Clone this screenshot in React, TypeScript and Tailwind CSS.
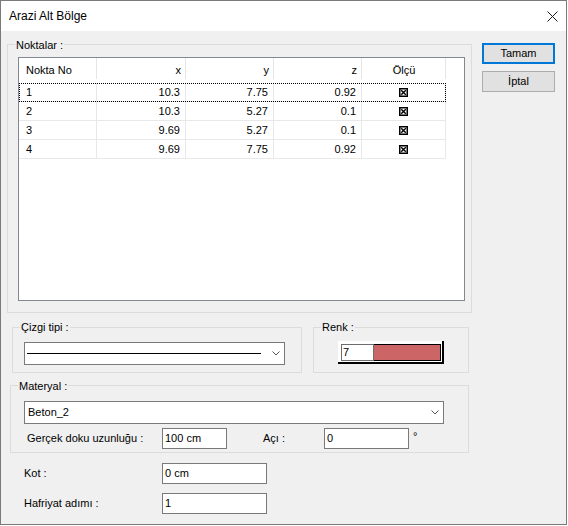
import type { ReactNode } from 'react'

const font = { fontFamily: '"Liberation Sans", Arial, sans-serif' }

const columns = [
  { label: 'Nokta No', width: 'w-[78px]', align: 'left' },
  { label: 'x', width: 'w-[89px]', align: 'right' },
  { label: 'y', width: 'w-[88px]', align: 'right' },
  { label: 'z', width: 'w-[88px]', align: 'right' },
  { label: 'Ölçü', width: 'w-[84px]', align: 'center' },
]

const points = [
  { no: '1', x: '10.3', y: '7.75', z: '0.92' },
  { no: '2', x: '10.3', y: '5.27', z: '0.1' },
  { no: '3', x: '9.69', y: '5.27', z: '0.1' },
  { no: '4', x: '9.69', y: '7.75', z: '0.92' },
]

function alignClass(align: string) {
  if (align === 'left') return 'justify-start pl-[7px]'
  if (align === 'center') return 'justify-center'
  return 'justify-end pr-[5px]'
}

function GroupBox({
  label,
  labelTop,
  className,
  children,
}: {
  label: string
  labelTop: string
  className: string
  children: ReactNode
}) {
  return (
    <div className={`relative border border-[#dcdcdc] ${className}`}>
      <span className={`absolute left-[7px] ${labelTop} bg-[#f0f0f0] px-[1px] leading-[13px]`}>
        {label}
      </span>
      {children}
    </div>
  )
}

function Chevron() {
  return (
    <svg width="8" height="5" viewBox="0 0 8 5" className="shrink-0">
      <path d="M0.5 0.5 L4 4 L7.5 0.5" fill="none" stroke="#555" strokeWidth="1" />
    </svg>
  )
}

function CheckMark() {
  return (
    <svg width="9" height="9" viewBox="0 0 9 9">
      <rect x="0.75" y="0.75" width="7.5" height="7.5" fill="none" stroke="#000" strokeWidth="1.5" />
      <path d="M2.2 2.2 L6.8 6.8 M6.8 2.2 L2.2 6.8" stroke="#000" strokeWidth="1.4" />
    </svg>
  )
}

function TextBox({ value, className }: { value: string; className: string }) {
  return (
    <div className={`flex h-[21px] items-center border border-[#7a7a7a] bg-white pl-[2px] ${className}`}>
      {value}
    </div>
  )
}

export default function App() {
  return (
    <div className="h-[526px] w-[568px] bg-white text-[11px] text-black" style={font}>
      <div className="flex h-[525px] w-[567px] flex-col border border-[#7a7a7a] bg-[#f0f0f0]">
        {/* title bar */}
        <div className="flex h-[30px] shrink-0 items-center justify-between bg-white pl-[8px] pr-[8px]">
          <span className="text-[12px]">Arazi Alt Bölge</span>
          <svg width="11" height="11" viewBox="0 0 11 11">
            <path d="M0.5 0.5 L10.5 10.5 M10.5 0.5 L0.5 10.5" stroke="#1a1a1a" strokeWidth="1" />
          </svg>
        </div>

        <div className="flex flex-1 pl-[6px]">
          <div className="mt-[13px] flex w-[465px] flex-col">
            <GroupBox label="Noktalar :" labelTop="-top-[6px]" className="h-[269px] pl-[10px] pt-[12px]">
              <div className="h-[244px] w-[447px] border border-[#828790] bg-white">
                <div className="flex h-[25px]">
                  {columns.map((c) => (
                    <div key={c.label} className={`relative flex h-full items-center ${c.width} ${alignClass(c.align)}`}>
                      {c.label}
                      <span className="absolute right-0 top-0 h-[21px] w-px bg-[#e5e5e5]" />
                    </div>
                  ))}
                </div>
                {points.map((p, i) => (
                  <div
                    key={p.no}
                    className={`flex h-[19px] w-[427px] border-b border-[#e8e8e8] ${
                      i === 0 ? 'outline-1 -outline-offset-1 outline-dotted outline-black' : ''
                    }`}
                  >
                    {[p.no, p.x, p.y, p.z].map((v, j) => (
                      <div
                        key={j}
                        className={`flex h-full items-center border-r border-[#e8e8e8] ${columns[j].width} ${alignClass(columns[j].align)}`}
                      >
                        {v}
                      </div>
                    ))}
                    <div className="flex h-full w-[84px] items-center justify-center border-r border-[#e8e8e8]">
                      <CheckMark />
                    </div>
                  </div>
                ))}
              </div>
            </GroupBox>

            <div className="ml-[5px] mt-[14px] flex gap-[11px]">
              <GroupBox label="Çizgi tipi :" labelTop="-top-[7px]" className="h-[46px] w-[290px] pl-[11px] pt-[14px]">
                <div className="flex h-[23px] w-[261px] items-center border border-[#7a7a7a] bg-white pl-[2px] pr-[4px]">
                  <div className="h-px w-[234px] bg-black" />
                  <div className="flex-1" />
                  <Chevron />
                </div>
              </GroupBox>
              <GroupBox label="Renk :" labelTop="-top-[7px]" className="h-[46px] w-[156px] pl-[24px] pt-[13px]">
                <div className="h-[23px] w-[106px] border-b-2 border-r-2 border-black bg-white pb-[1px] pl-[3px] pr-[1px] pt-[3px]">
                  <div className="flex h-full">
                    <div className="flex w-[33px] items-center border border-[#6d6d6d] bg-white pl-[1px]">7</div>
                    <div className="flex-1 border border-l-0 border-black bg-[#cc6666]" />
                  </div>
                </div>
              </GroupBox>
            </div>

            <GroupBox label="Materyal :" labelTop="-top-[6px]" className="ml-[3px] mt-[12px] h-[68px] w-[459px] pl-[13px] pt-[15px]">
              <div className="flex h-[23px] w-[420px] items-center justify-between border border-[#7a7a7a] bg-white pl-[3px] pr-[4px]">
                <span>Beton_2</span>
                <Chevron />
              </div>
              <div className="mt-[4px] flex items-center">
                <span className="ml-[3px] w-[135px]">Gerçek doku uzunluğu :</span>
                <TextBox value="100 cm" className="w-[65px]" />
                <span className="ml-[36px] w-[61px]">Açı :</span>
                <TextBox value="0" className="w-[85px]" />
                <span className="ml-[4px] self-start">°</span>
              </div>
            </GroupBox>

            <div className="ml-[17px] mt-[10px] flex items-center">
              <span className="w-[138px]">Kot :</span>
              <TextBox value="0 cm" className="w-[105px]" />
            </div>
            <div className="ml-[17px] mt-[9px] flex items-center">
              <span className="w-[138px]">Hafriyat adımı :</span>
              <TextBox value="1" className="w-[105px]" />
            </div>
          </div>

          <div className="ml-[10px] mt-[12px] flex flex-col gap-[7px]">
            <button className="h-[21px] w-[73px] border-2 border-[#0078d7] bg-[#e1e1e1] text-[11px]">
              Tamam
            </button>
            <button className="h-[21px] w-[73px] border border-[#adadad] bg-[#e1e1e1] text-[11px]">
              İptal
            </button>
          </div>
        </div>
      </div>
    </div>
  )
}
